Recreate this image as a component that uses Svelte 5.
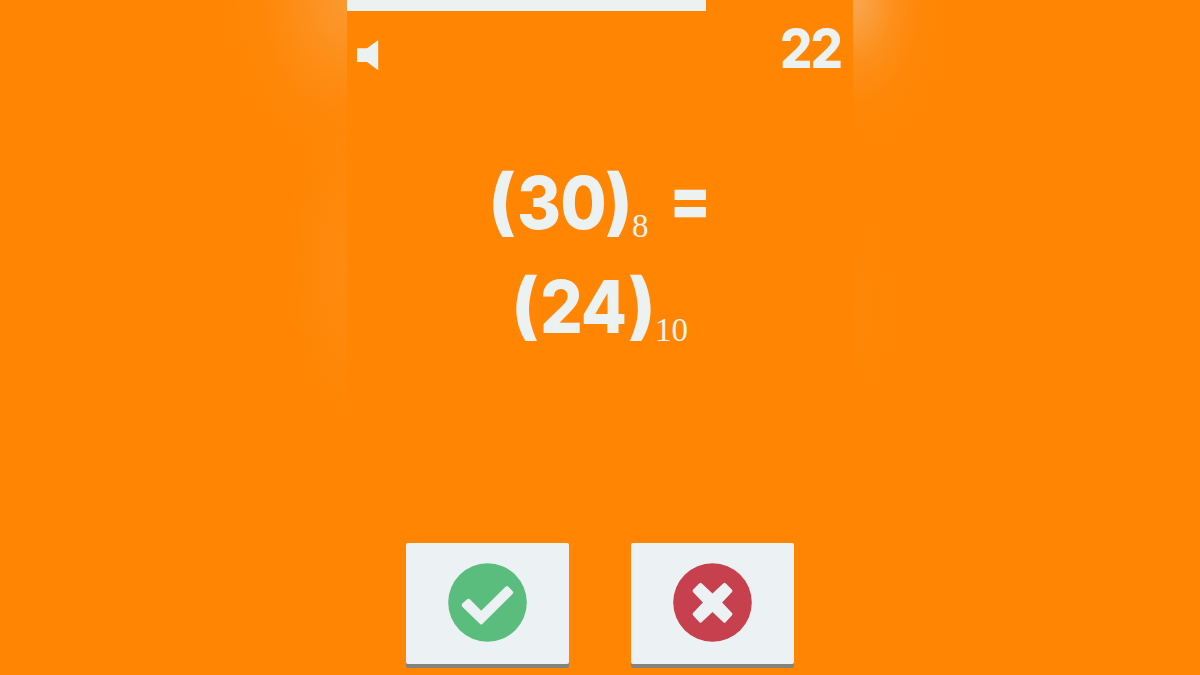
<script>
  let score = $state(22);
  let timeLeft = $state(71);
  let muted = $state(true);

  const question = {
    left: { value: "30", base: 8 },
    right: { value: "24", base: 10 },
  };

  function answer(yes) {
    const { left, right } = question;
    const equal = parseInt(left.value, left.base) === parseInt(right.value, right.base);
    if (equal === yes) score += 1;
  }
</script>

{#snippet number(n)}
  <span class="paren">(</span>
  <span class="digits">{n.value}</span>
  <span class="paren close">)</span>
  <span class="base">{n.base}</span>
{/snippet}

<div class="page">
  <div class="side left"></div>
  <main class="game">
    <div class="timer"><div class="bar" style="width: {timeLeft}%"></div></div>
    <header>
      <button class="sound" onclick={() => (muted = !muted)} aria-label="Sound" aria-pressed={!muted}>
        <svg width="22" height="31" viewBox="0 0 22 31">
          <path d="M0 8.3h10L21.2 0v30.3L10 22.1H0z" fill="#ecf2f2" />
        </svg>
      </button>
      <span class="score">{score}</span>
    </header>

    <section class="question">
      <div class="row first">
        {@render number(question.left)}
        <span class="equals">=</span>
      </div>
      <div class="row second">
        {@render number(question.right)}
      </div>
    </section>

    <div class="answers">
      <button class="answer" onclick={() => answer(true)} aria-label="True">
        <svg width="79" height="79" viewBox="-39.5 -39.5 79 79">
          <circle r="39.3" fill="#5bbd7d" />
          <path
            d="M-25.2 1-20-3.4Q-18.8-4.4-17.6-3.2L-6.3 8.2 18.3-16Q19.5-17.1 20.7-16L25.2-11.2Q26.2-10 25.2-8.8L-5.2 21.6Q-6.3 22.6-7.4 21.6L-25.2 4.2Q-26.4 2.6-25.2 1Z"
            fill="#ecf2f3"
          />
        </svg>
      </button>
      <button class="answer" onclick={() => answer(false)} aria-label="False">
        <svg width="79" height="79" viewBox="-39.5 -39.5 79 79">
          <circle r="39.3" fill="#c7404d" />
          <path
            d="M-13.1-19.2Q-12-20.2-10.9-19.2L0-9 10.9-19.2Q12-20.2 13.1-19.2L19.5-12.8Q20.5-11.7 19.5-10.6L9.6 0 19.5 10.6Q20.5 11.7 19.5 12.8L13.1 19.8Q12 20.8 10.9 19.8L0 9.4-10.9 19.8Q-12 20.8-13.1 19.8L-19.5 12.8Q-20.5 11.7-19.5 10.6L-9.6 0-19.5-10.6Q-20.5-11.7-19.5-12.8Z"
            fill="#ecf2f3"
          />
        </svg>
      </button>
    </div>
  </main>
  <div class="side right"></div>
</div>

<style>
  :global(body) {
    margin: 0;
    background: #ff8503;
  }

  .page {
    display: grid;
    grid-template-columns: 347px 506px 347px;
    height: 675px;
    overflow: hidden;
    background: #ff8503;
    color: #ecf2f2;
    font-family: Inter, "Liberation Sans", sans-serif;
  }
  .side.left {
    background:
      radial-gradient(ellipse 130px 175px at 100% 0, rgba(250, 160, 64, 0.75), rgba(251, 153, 48, 0.5) 35%, rgba(253, 142, 24, 0.25) 65%, transparent),
      radial-gradient(ellipse 60px 160px at 100% 265px, rgba(250, 155, 50, 0.28), transparent);
  }
  .side.right {
    background:
      radial-gradient(ellipse 105px 160px at 0 0, rgba(247, 174, 98, 0.85), rgba(251, 153, 48, 0.5) 40%, rgba(253, 142, 24, 0.2) 65%, transparent),
      radial-gradient(ellipse 50px 110px at 0 310px, rgba(250, 155, 50, 0.09), transparent);
  }

  .game {
    display: flex;
    flex-direction: column;
  }
  .timer { height: 11px; }
  .bar {
    height: 100%;
    background: #ecf2f2;
  }

  header {
    display: flex;
    justify-content: space-between;
    height: 139px;
    padding: 11px 11px 0 10px;
    box-sizing: border-box;
  }
  .sound {
    align-self: flex-start;
    margin-top: 18px;
    padding: 0;
    border: none;
    background: none;
    cursor: pointer;
  }
  svg { display: block; }
  .score {
    margin-top: 1px;
    margin-right: -2px;
    font-size: 53px;
    font-weight: 800;
    line-height: 53px;
    letter-spacing: -2px;
    transform: scaleX(0.96);
    transform-origin: 0 0;
  }

  .question {
    height: 393px;
    font-size: 73px;
    font-weight: 800;
  }
  .row {
    display: flex;
    align-items: baseline;
    height: 104px;
    line-height: 104px;
  }
  .row.first { padding-left: 141px; }
  .row.second { padding-left: 164px; }
  .paren {
    width: 28px;
    flex: none;
    transform: translateY(-1px);
  }
  .paren.close { width: 27px; }
  .digits {
    width: 89px;
    flex: none;
    letter-spacing: -1px;
    white-space: nowrap;
    transform: translate(1px, 1px) scaleX(0.92);
    transform-origin: 0 0;
  }
  .base {
    font-family: "Liberation Serif", serif;
    font-size: 33px;
    font-weight: 400;
    line-height: 34px;
    transform: translateY(9px);
  }
  .equals {
    margin-left: 20px;
    transform: translateY(-3px) scaleX(0.85);
    transform-origin: 0 0;
  }

  .answers {
    display: flex;
    gap: 62.5px;
    padding-left: 59px;
  }
  .answer {
    display: flex;
    align-items: center;
    justify-content: center;
    width: 162.5px;
    height: 121px;
    padding: 0 0 3px;
    border: none;
    border-radius: 2px;
    background: #ecf2f3;
    box-shadow: 0 4px 0 #85817b;
    cursor: pointer;
  }
</style>
